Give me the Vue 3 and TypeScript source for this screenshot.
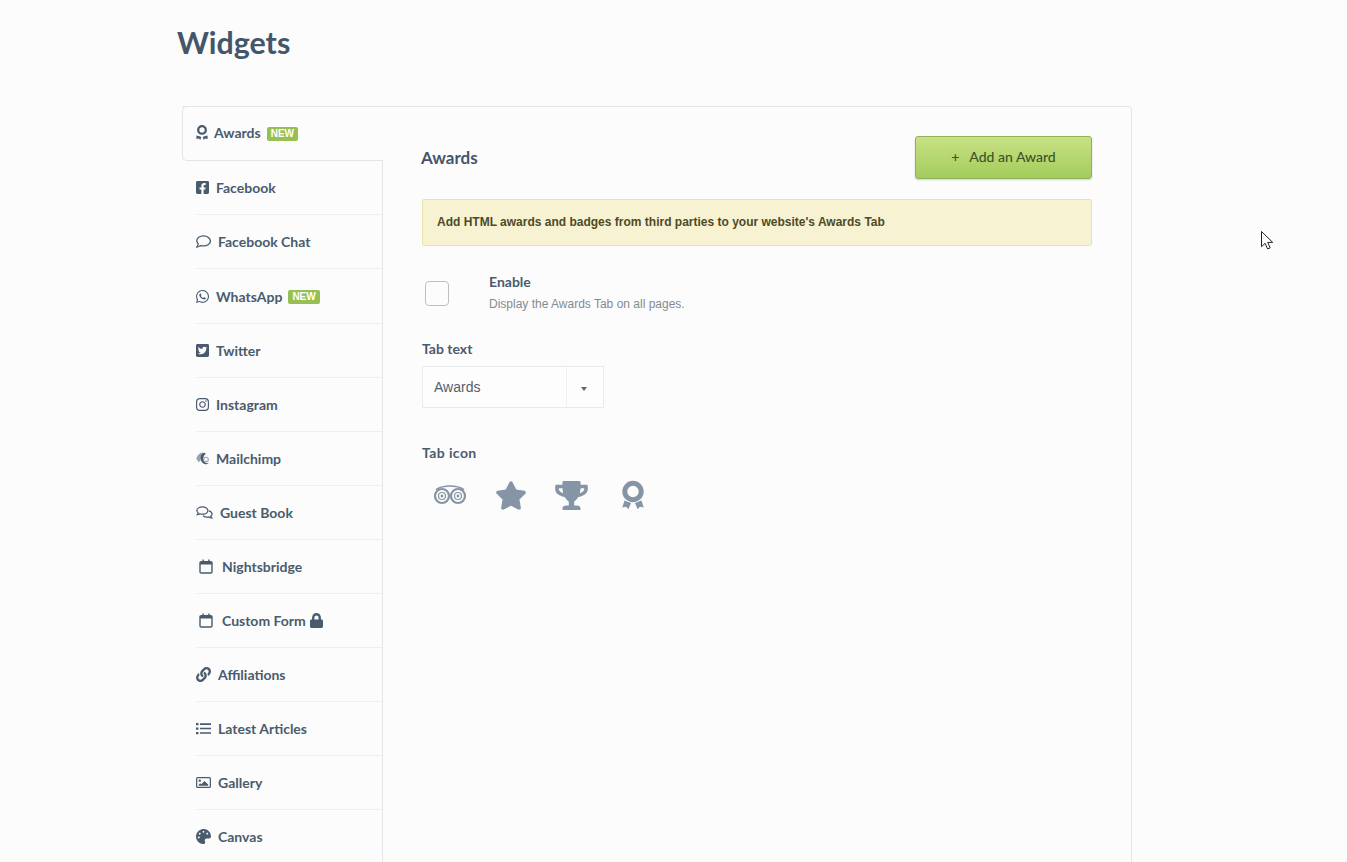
<script setup lang="ts">
interface Widget {
  label: string;
  icon: string;
  isNew?: boolean;
  locked?: boolean;
}

const widgets: Widget[] = [
  { label: 'Facebook', icon: 'facebook' },
  { label: 'Facebook Chat', icon: 'comment' },
  { label: 'WhatsApp', icon: 'whatsapp', isNew: true },
  { label: 'Twitter', icon: 'twitter' },
  { label: 'Instagram', icon: 'instagram' },
  { label: 'Mailchimp', icon: 'mailchimp' },
  { label: 'Guest Book', icon: 'comments' },
  { label: 'Nightsbridge', icon: 'calendar' },
  { label: 'Custom Form', icon: 'calendar', locked: true },
  { label: 'Affiliations', icon: 'link' },
  { label: 'Latest Articles', icon: 'list' },
  { label: 'Gallery', icon: 'image' },
  { label: 'Canvas', icon: 'palette' },
];
</script>

<template>
  <div class="page">
    <h1 class="title">Widgets</h1>

    <div class="card">
      <aside class="sidebar">
        <div class="tab">
          <svg class="ic ic-award" viewBox="0 0 12 15">
            <circle cx="6" cy="4.9" r="3.8" fill="none" stroke="currentColor" stroke-width="2.3" />
            <path d="M.4 10.600l4 .8.800 1-1 2.600-1.200-1.400-2.600.400zM11.600 10.600l-4 .8-.8 1 1 2.600 1.200-1.400 2.600.4z" fill="currentColor" />
          </svg>
          <span>Awards</span>
          <span class="badge">NEW</span>
        </div>

        <ul class="list">
          <li v-for="w in widgets" :key="w.label" class="item" :class="'item-' + w.icon">
            <svg v-if="w.icon === 'facebook'" class="ic" viewBox="0 0 448 512">
              <path fill="currentColor" d="M400 32H48A48 48 0 0 0 0 80v352a48 48 0 0 0 48 48h137.25V327.69h-63V256h63v-54.64c0-62.15 37-96.48 93.67-96.48 27.14 0 55.52 4.84 55.52 4.84v61h-31.27c-30.81 0-40.42 19.12-40.42 38.73V256h68.78l-11 71.69h-57.78V480H400a48 48 0 0 0 48-48V80a48 48 0 0 0-48-48z" />
            </svg>
            <svg v-else-if="w.icon === 'comment'" class="ic" viewBox="0.4 0.3 15.4 13">
              <path fill="none" stroke="currentColor" stroke-width="1.3" d="M8.2 1C4.3 1 1.2 3.2 1.2 6c0 1.2.6 2.3 1.5 3.1-.2 1.3-1 2.600-1.600 3.400 1.600-.1 3-.7 4-1.500.9.3 1.900.4 3.100.4 3.900 0 7-2.200 7-5S12.100 1 8.200 1z" />
            </svg>
            <svg v-else-if="w.icon === 'whatsapp'" class="ic" viewBox="0 0 448 512">
              <path fill="currentColor" d="M380.9 97.1C339 55.1 283.2 32 223.9 32c-122.4 0-222 99.6-222 222 0 39.1 10.2 77.3 29.6 111L0 480l117.7-30.9c32.4 17.7 68.9 27 106.1 27h.1c122.3 0 224.1-99.6 224.1-222 0-59.3-25.2-115-67.1-157zm-157 341.6c-33.2 0-65.7-8.9-94-25.7l-6.7-4-69.8 18.3L72 359.2l-4.4-7c-18.5-29.4-28.2-63.3-28.2-98.2 0-101.7 82.8-184.5 184.6-184.5 49.3 0 95.6 19.2 130.4 54.1 34.8 34.9 56.2 81.2 56.1 130.5 0 101.8-84.9 184.6-186.6 184.6zm101.2-138.2c-5.5-2.8-32.8-16.2-37.9-18-5.1-1.9-8.8-2.8-12.5 2.8-3.7 5.6-14.3 18-17.6 21.8-3.2 3.7-6.5 4.2-12 1.4-32.6-16.3-54-29.1-75.5-66-5.7-9.8 5.7-9.1 16.3-30.3 1.8-3.7.9-6.9-.5-9.7-1.4-2.8-12.5-30.1-17.1-41.2-4.5-10.8-9.1-9.3-12.5-9.5-3.2-.2-6.9-.2-10.6-.2-3.7 0-9.7 1.4-14.8 6.9-5.1 5.6-19.4 19-19.4 46.3 0 27.3 19.9 53.7 22.6 57.4 2.8 3.7 39.1 59.7 94.8 83.8 35.2 15.2 49 16.5 66.6 13.9 10.7-1.6 32.8-13.4 37.4-26.4 4.6-13 4.6-24.1 3.2-26.4-1.3-2.5-5-3.9-10.5-6.6z" />
            </svg>
            <svg v-else-if="w.icon === 'twitter'" class="ic" viewBox="0 0 448 512">
              <path fill="currentColor" d="M400 32H48C21.5 32 0 53.5 0 80v352c0 26.5 21.5 48 48 48h352c26.5 0 48-21.5 48-48V80c0-26.5-21.5-48-48-48zm-48.9 158.8c.2 2.8.2 5.7.2 8.5 0 86.7-66 186.6-186.6 186.6-37.2 0-71.7-10.8-100.7-29.4 5.3.6 10.4.8 15.8.8 30.7 0 58.9-10.4 81.4-28-28.8-.6-53-19.5-61.3-45.5 10.1 1.5 19.2 1.5 29.6-1.2-30-6.1-52.5-32.5-52.5-64.4v-.8c8.7 4.9 18.9 7.9 29.6 8.3a65.447 65.447 0 0 1-29.2-54.6c0-12.2 3.2-23.4 8.9-33.1 32.3 39.8 80.8 65.8 135.2 68.6-9.3-44.5 24-80.6 64-80.6 18.9 0 35.9 7.9 47.9 20.7 14.8-2.8 29-8.3 41.6-15.8-4.9 15.2-15.2 28-28.8 36.1 13.2-1.4 26-5.1 37.8-10.2-8.9 13.1-20.1 24.7-32.9 34z" />
            </svg>
            <svg v-else-if="w.icon === 'instagram'" class="ic" viewBox="0 0 448 512">
              <path fill="currentColor" d="M224.1 141c-63.6 0-114.9 51.3-114.9 114.9s51.3 114.9 114.9 114.9S339 319.5 339 255.9 287.7 141 224.1 141zm0 189.6c-41.1 0-74.7-33.5-74.7-74.7s33.5-74.7 74.7-74.7 74.7 33.5 74.7 74.7-33.6 74.7-74.7 74.7zm146.4-194.3c0 14.9-12 26.8-26.8 26.8-14.9 0-26.8-12-26.8-26.8s12-26.8 26.8-26.8 26.8 12 26.8 26.8zm76.1 27.2c-1.7-35.9-9.9-67.7-36.2-93.9-26.2-26.2-58-34.4-93.9-36.2-37-2.1-147.9-2.1-184.9 0-35.8 1.7-67.6 9.9-93.9 36.1s-34.4 58-36.2 93.9c-2.1 37-2.1 147.9 0 184.9 1.7 35.9 9.9 67.7 36.2 93.9s58 34.4 93.9 36.2c37 2.1 147.9 2.1 184.9 0 35.9-1.7 67.7-9.9 93.9-36.2 26.2-26.2 34.4-58 36.2-93.9 2.1-37 2.1-147.8 0-184.8zM398.8 388c-7.8 19.6-22.9 34.7-42.6 42.6-29.5 11.7-99.5 9-132.1 9s-102.7 2.6-132.1-9c-19.6-7.8-34.7-22.9-42.6-42.6-11.7-29.5-9-99.5-9-132.1s-2.6-102.7 9-132.1c7.8-19.6 22.9-34.7 42.6-42.6 29.5-11.7 99.5-9 132.1-9s102.7-2.6 132.1 9c19.6 7.8 34.7 22.9 42.6 42.6 11.7 29.5 9 99.5 9 132.1s2.7 102.7-9 132.1z" />
            </svg>
            <svg v-else-if="w.icon === 'mailchimp'" class="ic" viewBox="0 0 14 15">
              <path fill="#98a3ae" d="M8 .8C4.4 1 .6 4.6.4 8.2c1.4.9 1.8 2.4 2.8 3.4L5 9 4.8 5.4z" />
              <path fill="currentColor" d="M9.2 1.2C6.2 1.7 4.4 4.4 4.8 7.4c.3 2.9 2.3 5.6 5.2 6.2 1.7.4 3.2-.3 3.7-1.4-1.6.7-3.4.2-4.4-.9-1.5-1.5-1.8-4.1-.9-6.2.5-1.2 1.5-2 2.3-2.4z" />
              <circle cx="10.8" cy="8.6" r="2.5" fill="none" stroke="#98a3ae" stroke-width="1.1" />
            </svg>
            <svg v-else-if="w.icon === 'comments'" class="ic" viewBox="0 0 18 14">
              <path fill="none" stroke="currentColor" stroke-width="1.3" d="M6.8 1C3.6 1 1 2.7 1 4.9c0 1 .5 1.8 1.3 2.5-.2.7-.6 1.3-1 1.9 1.1-.1 2-.5 2.7-1 .9.3 1.8.5 2.8.5 3.2 0 5.8-1.7 5.8-3.9S10 1 6.8 1z" />
              <path fill="none" stroke="currentColor" stroke-width="1.3" d="M13.6 5.2c2 .5 3.4 1.8 3.4 3.3 0 .9-.5 1.7-1.3 2.3.1.8.5 1.4 1 2-1.1-.1-2.1-.5-2.8-1.1-.7.2-1.4.3-2.1.3-1.8 0-3.4-.6-4.4-1.6" />
            </svg>
            <svg v-else-if="w.icon === 'calendar'" class="ic" viewBox="0 0 14 15">
              <rect x="1" y="2.6" width="12" height="11.4" rx="1.2" fill="none" stroke="currentColor" stroke-width="1.4" />
              <path d="M1 3h12v2.4H1zM3.4.6h1.4v3H3.4zM9.2.6h1.4v3H9.2z" fill="currentColor" />
            </svg>
            <svg v-else-if="w.icon === 'link'" class="ic" viewBox="0 0 512 512">
              <path fill="currentColor" d="M326.612 185.391c59.747 59.809 58.927 155.698.36 214.59-.11.12-.24.25-.36.37l-67.2 67.2c-59.27 59.27-155.699 59.262-214.96 0-59.27-59.26-59.27-155.7 0-214.96l37.106-37.106c9.84-9.84 26.786-3.3 27.294 10.606.648 17.722 3.826 35.527 9.69 52.721 1.986 5.822.567 12.262-3.783 16.612l-13.087 13.087c-28.026 28.026-28.905 73.66-1.155 101.96 28.024 28.579 74.086 28.749 102.325.51l67.2-67.19c28.191-28.191 28.073-73.757 0-101.83-3.701-3.694-7.429-6.564-10.341-8.569a16.037 16.037 0 0 1-6.947-12.606c-.396-10.567 3.348-21.456 11.698-29.806l21.054-21.055c5.521-5.521 14.182-6.199 20.584-1.731a152.482 152.482 0 0 1 20.522 17.197zM467.547 44.449c-59.261-59.262-155.69-59.27-214.96 0l-67.2 67.2c-.12.12-.25.25-.36.37-58.566 58.892-59.387 154.781.36 214.59a152.454 152.454 0 0 0 20.521 17.196c6.402 4.468 15.064 3.789 20.584-1.731l21.054-21.055c8.35-8.35 12.094-19.239 11.698-29.806a16.037 16.037 0 0 0-6.947-12.606c-2.912-2.005-6.64-4.875-10.341-8.569-28.073-28.073-28.191-73.639 0-101.83l67.2-67.19c28.239-28.239 74.3-28.069 102.325.51 27.75 28.3 26.872 73.934-1.155 101.96l-13.087 13.087c-4.35 4.35-5.769 10.79-3.783 16.612 5.864 17.194 9.042 34.999 9.69 52.721.509 13.906 17.454 20.446 27.294 10.606l37.106-37.106c59.271-59.259 59.271-155.699.001-214.959z" />
            </svg>
            <svg v-else-if="w.icon === 'list'" class="ic" viewBox="0 0 16 14">
              <path fill="currentColor" d="M0 1h2.6v2.4H0zM4.2 1.4H16v1.8H4.2zM0 5.8h2.6v2.4H0zM4.2 6.1H16v1.8H4.2zM0 10.6h2.6V13H0zM4.2 10.9H16v1.8H4.2z" />
            </svg>
            <svg v-else-if="w.icon === 'image'" class="ic" viewBox="0 0 16 14">
              <rect x=".7" y="1.7" width="14.6" height="10.6" rx="1" fill="none" stroke="currentColor" stroke-width="1.3" />
              <circle cx="4" cy="5" r="1.3" fill="currentColor" />
              <path fill="currentColor" d="M3 10.4V9l1.4-1.2 1.2 1 3.4-3.3 4 3.6v1.3z" />
            </svg>
            <svg v-else-if="w.icon === 'palette'" class="ic" viewBox="0 0 512 512">
              <path fill="currentColor" d="M204.3 5C104.9 24.4 24.8 104.3 5.2 203.4c-37 187 131.7 326.4 258.8 306.7 41.2-6.4 61.4-54.6 42.5-91.7-23.1-45.4 9.9-98.4 60.9-98.4h79.7c35.8 0 64.8-29.6 64.9-65.3C511.5 97.1 368.1-26.9 204.3 5zM96 320c-17.7 0-32-14.3-32-32s14.3-32 32-32 32 14.3 32 32-14.3 32-32 32zm32-128c-17.7 0-32-14.3-32-32s14.3-32 32-32 32 14.3 32 32-14.3 32-32 32zm128-64c-17.7 0-32-14.3-32-32s14.3-32 32-32 32 14.3 32 32-14.3 32-32 32zm128 64c-17.7 0-32-14.3-32-32s14.3-32 32-32 32 14.3 32 32-14.3 32-32 32z" />
            </svg>
            <span>{{ w.label }}</span>
            <span v-if="w.isNew" class="badge">NEW</span>
            <svg v-if="w.locked" class="lock" viewBox="0 0 448 512">
              <path fill="currentColor" d="M400 224h-24v-72C376 68.2 307.8 0 224 0S72 68.2 72 152v72H48c-26.5 0-48 21.5-48 48v192c0 26.5 21.5 48 48 48h352c26.5 0 48-21.5 48-48V272c0-26.5-21.5-48-48-48zm-104 0H152v-72c0-39.7 32.3-72 72-72s72 32.3 72 72v72z" />
            </svg>
          </li>
        </ul>
      </aside>

      <main class="content">
        <div class="head">
          <h2 class="heading">Awards</h2>
          <button class="add-btn" type="button"><span class="plus">+</span>Add an Award</button>
        </div>

        <div class="notice">Add HTML awards and badges from third parties to your website's Awards Tab</div>

        <div class="enable">
          <span class="checkbox"></span>
          <div>
            <div class="enable-title">Enable</div>
            <div class="enable-desc">Display the Awards Tab on all pages.</div>
          </div>
        </div>

        <div class="field-label label-text">Tab text</div>
        <div class="select">
          <span class="select-value">Awards</span>
          <span class="select-arrow"></span>
        </div>

        <div class="field-label label-icon">Tab icon</div>
        <div class="icons">
          <svg class="tab-ic" viewBox="0 0 34 20" width="34" height="20">
            <g fill="none" stroke="#8595a5">
              <path stroke-width="1.7" d="M3 4.6C7.5 1.8 12 1 17 1s9.5.8 14 3.6" />
              <circle cx="9" cy="11" r="7" stroke-width="2.2" />
              <circle cx="25" cy="11" r="7" stroke-width="2.2" />
              <circle cx="9" cy="11" r="3.5" stroke-width="1.2" />
              <circle cx="25" cy="11" r="3.5" stroke-width="1.2" />
            </g>
            <circle cx="9" cy="11" r="1.4" fill="#8595a5" />
            <circle cx="25" cy="11" r="1.4" fill="#8595a5" />
          </svg>
          <svg class="tab-ic" viewBox="0 0 576 512" width="32" height="29">
            <path fill="#8595a5" d="M259.3 17.8L194 150.2 47.9 171.5c-26.2 3.8-36.7 36.1-17.7 54.6l105.7 103-25 145.5c-4.5 26.3 23.2 46 46.4 33.7L288 439.6l130.7 68.7c23.2 12.2 50.9-7.4 46.4-33.7l-25-145.5 105.7-103c19-18.5 8.5-50.8-17.7-54.6L382 150.2 316.7 17.8c-11.7-23.6-45.6-23.9-57.4 0z" />
          </svg>
          <svg class="tab-ic" viewBox="0 0 576 512" width="33" height="29">
            <path fill="#8595a5" d="M552 64H448V24c0-13.3-10.7-24-24-24H152c-13.3 0-24 10.7-24 24v40H24C10.7 64 0 74.7 0 88v56c0 35.7 22.5 72.4 61.9 100.7 31.5 22.7 69.8 37.1 110 41.7C203.3 338.5 240 360 240 360v72h-48c-35.3 0-64 20.7-64 56v12c0 6.6 5.4 12 12 12h296c6.6 0 12-5.4 12-12v-12c0-35.3-28.7-56-64-56h-48v-72s36.7-21.5 68.1-73.6c40.3-4.6 78.6-19 110-41.7 39.3-28.3 61.9-65 61.9-100.7V88c0-13.3-10.7-24-24-24zM99.3 192.8C74.9 175.2 64 155.6 64 144v-16h64.2c1 32.6 5.8 61.2 12.8 86.2-15.1-5.2-29.2-12.4-41.7-21.4zM512 144c0 16.1-17.7 36.1-35.3 48.8-12.5 9-26.7 16.2-41.8 21.4 7-25 11.8-53.6 12.8-86.2H512v16z" />
          </svg>
          <svg class="tab-ic tab-ic-award" viewBox="0 0 24 30" width="24" height="30">
            <circle cx="12" cy="11.5" r="8.2" fill="none" stroke="#8595a5" stroke-width="5" />
            <path fill="#8595a5" d="M3.5 20.5l6.5 2.5-2.6 6.3-2.3-2.5-3.8.7zM20.5 20.5L14 23l2.6 6.3 2.300-2.500 3.800.7z" />
          </svg>
        </div>
      </main>
    </div>

    <svg class="cursor" viewBox="0 0 13 19" width="13" height="19">
      <path d="M.5.5v15.2l3.6-3.4 2.5 5.6 2.6-1.1-2.500-5.400h5z" fill="#fff" stroke="#222" stroke-width="1" />
    </svg>
  </div>
</template>

<style scoped>
.page {
  position: relative;
  height: 862px;
  overflow: hidden;
  background: #fcfcfc;
  color: #4a5b6d;
  font-family: 'Lato', 'Liberation Sans', sans-serif;
}

.title {
  margin: 0;
  padding: 23px 0 0 177px;
  font-size: 30.4px;
  line-height: 38px;
  font-weight: 700;
  color: #44566a;
}

.card {
  display: flex;
  width: 950px;
  margin: 45px 0 0 182px;
  border-top: 1px solid #e4e5e7;
  border-right: 1px solid #e4e5e7;
  border-top-right-radius: 4px;
  box-sizing: border-box;
  min-height: 800px;
}

.sidebar {
  flex: 0 0 201px;
  margin-top: -1px;
}

.tab {
  display: flex;
  align-items: center;
  height: 55px;
  padding: 0 0 2px 13px;
  box-sizing: border-box;
  border: 1px solid #e4e5e7;
  border-right: 0;
  border-radius: 5px 0 0 5px;
  font-size: 14px;
  font-weight: 700;
}

.list {
  list-style: none;
  margin: 0 0 0 14px;
  padding: 0;
  border-right: 1px solid #e4e5e7;
}

.item {
  display: flex;
  align-items: center;
  height: 54px;
  box-sizing: border-box;
  border-bottom: 1px solid #eeeff0;
  font-size: 14px;
  font-weight: 700;
}

.item-whatsapp {
  height: 55px;
}

.ic {
  flex: none;
  width: 13px;
  height: 15px;
  margin-right: 7px;
}

.ic-award {
  width: 12px;
  margin-right: 6px;
}

.item-comment .ic,
.item-link .ic,
.item-list .ic,
.item-image .ic,
.item-palette .ic {
  width: 15px;
  margin-right: 7px;
}

.item-comments .ic {
  width: 17px;
  margin-right: 7px;
}

.item-calendar .ic {
  width: 14px;
  margin: 0 9px 0 3px;
}

.badge {
  margin-left: 6px;
  padding: 0 4px;
  height: 14px;
  line-height: 14px;
  border-radius: 2px;
  background: #97bf52;
  color: #fff;
  font-family: 'Liberation Sans', sans-serif;
  font-size: 10px;
  font-weight: 700;
  margin-top: 2px;
}

.lock {
  width: 13px;
  height: 15px;
  margin-left: 4px;
}

.content {
  flex: 1;
  padding: 29px 39px 0;
  min-width: 0;
}

.head {
  display: flex;
  align-items: center;
  justify-content: space-between;
}

.heading {
  margin: 0 0 0 -1px;
  font-size: 17px;
  font-weight: 700;
  color: #44566a;
}

.add-btn {
  width: 177px;
  height: 43px;
  padding: 0 0 2px;
  border: 1px solid #8fb35a;
  border-radius: 3px;
  background: linear-gradient(#c8e184, #a3cc5c);
  box-shadow: 0 1px 2px rgba(0, 0, 0, 0.18);
  color: #3f5228;
  font-family: 'Lato', sans-serif;
  font-size: 14px;
  font-weight: 500;
}

.plus {
  margin-right: 10px;
}

.notice {
  margin-top: 20px;
  height: 47px;
  line-height: 45px;
  padding-left: 14px;
  box-sizing: border-box;
  background: #f6f2d2;
  border: 1px solid #e9e3ac;
  border-radius: 2px;
  color: #4e4a25;
  font-family: 'Liberation Sans', sans-serif;
  font-size: 12px;
  font-weight: 700;
}

.enable {
  display: flex;
  margin-top: 28px;
}

.checkbox {
  flex: none;
  width: 24px;
  height: 25px;
  box-sizing: border-box;
  margin: 7px 40px 0 3px;
  border: 1px solid #bbbfc3;
  border-radius: 4px;
  background: #fcfcfc;
}

.enable-title {
  font-size: 14px;
  font-weight: 700;
  line-height: 16px;
}

.enable-desc {
  margin-top: 6px;
  font-family: 'Liberation Sans', sans-serif;
  font-size: 12px;
  line-height: 16px;
  color: #858a90;
}

.field-label {
  font-size: 14px;
  line-height: 16px;
  font-weight: 700;
}

.label-text {
  margin-top: 29px;
}

.label-icon {
  margin-top: 37px;
  letter-spacing: 0.4px;
}

.select {
  display: flex;
  align-items: center;
  width: 182px;
  height: 42px;
  margin-top: 9px;
  box-sizing: border-box;
  border: 1px solid #e9eaeb;
  background: #fdfdfd;
  font-family: 'Liberation Sans', sans-serif;
  font-size: 14px;
  color: #55606b;
}

.select-value {
  flex: 1;
  padding-left: 11px;
}

.select-arrow {
  position: relative;
  width: 36px;
  height: 100%;
  border-left: 1px solid #f0f1f2;
}

.select-arrow::after {
  content: '';
  position: absolute;
  left: 14px;
  top: 20px;
  border: 3px solid transparent;
  border-top: 4px solid #5a6570;
  border-bottom: 0;
}

.icons {
  display: flex;
  align-items: center;
  height: 30px;
  margin-top: 19px;
  padding-left: 11px;
}

.tab-ic {
  flex: none;
  margin-right: 28px;
}

.tab-ic-award {
  margin-left: 5px;
}

.cursor {
  position: absolute;
  left: 1261px;
  top: 231px;
}
</style>
